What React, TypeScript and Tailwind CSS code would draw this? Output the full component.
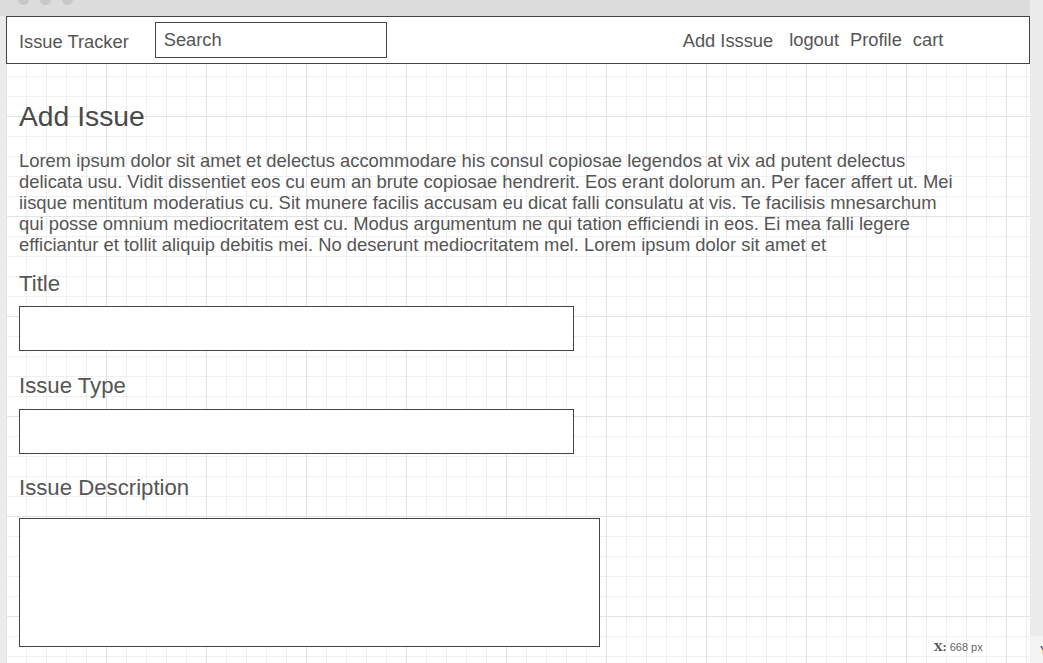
import React from "react";

const gridBg =
  "bg-[linear-gradient(to_right,#e3e3e3_1px,transparent_1px),linear-gradient(to_bottom,#e3e3e3_1px,transparent_1px),linear-gradient(to_right,#efefef_1px,transparent_1px),linear-gradient(to_bottom,#efefef_1px,transparent_1px)] bg-[length:100px_100px,100px_100px,20px_20px,20px_20px]";

const Header = (): React.ReactElement => {
  const links = [
    { name: "Add Isssue", cls: "mt-[2px]" },
    { name: "logout", cls: "ml-[16px]" },
    { name: "Profile", cls: "ml-[11px]" },
    { name: "cart", cls: "ml-[11px]" },
  ];

  return (
    <div className="flex h-[48px] items-center border border-[#444] bg-white pl-[12px] text-[18.3px] text-[#555]">
      <span className="mt-[4px]">Issue Tracker</span>
      <div className="ml-[26px] flex h-[36px] w-[232px] items-center border border-[#444] bg-white pl-[8px]">
        Search
      </div>
      <nav className="ml-[296px] flex items-center">
        {links.map((link) => (
          <a key={link.name} className={"cursor-pointer " + link.cls}>
            {link.name}
          </a>
        ))}
      </nav>
    </div>
  );
};

const Field = ({
  label,
  top,
  gap,
  box,
}: {
  label: string;
  top: string;
  gap: string;
  box: string;
}): React.ReactElement => {
  return (
    <div className={top}>
      <label className="block text-[22.2px] leading-[25px] text-[#555]">
        {label}
      </label>
      <div className={gap + " border border-[#444] bg-white " + box} />
    </div>
  );
};

const App = (): React.ReactElement => {
  return (
    <div className="flex h-[663px] w-full overflow-hidden font-['Liberation_Sans',Arial,sans-serif]">
      <div className="flex w-[1030px] shrink-0 flex-col">
        {/* window chrome */}
        <div className="flex h-[16px] shrink-0 gap-[11px] overflow-hidden bg-[#dcdcdc] pl-[18px]">
          <span className="-mt-[6px] h-[11px] w-[11px] rounded-full bg-[#c8c8c8]" />
          <span className="-mt-[6px] h-[11px] w-[11px] rounded-full bg-[#c8c8c8]" />
          <span className="-mt-[6px] h-[11px] w-[11px] rounded-full bg-[#c8c8c8]" />
        </div>
        <div className="flex flex-1">
          <div className="w-[6px] bg-[#ebebeb]" />
          <div className={"relative flex-1 bg-white " + gridBg}>
            <Header />
            <div className="px-[13px] text-[#555]">
              <h1 className="mt-[36px] text-[28.3px] leading-[32px] text-[#4a4a4a]">
                Add Issue
              </h1>
              <p className="mt-[18px] max-w-[940px] text-[18.4px] leading-[21px]">
                Lorem ipsum dolor sit amet et delectus accommodare his consul
                copiosae legendos at vix ad putent delectus delicata usu. Vidit
                dissentiet eos cu eum an brute copiosae hendrerit. Eos erant
                dolorum an. Per facer affert ut. Mei iisque mentitum moderatius
                cu. Sit munere facilis accusam eu dicat falli consulatu at vis.
                Te facilisis mnesarchum qui posse omnium mediocritatem est cu.
                Modus argumentum ne qui tation efficiendi in eos. Ei mea falli
                legere efficiantur et tollit aliquip debitis mei. No deserunt
                mediocritatem mel. Lorem ipsum dolor sit amet et
              </p>
              <Field
                label="Title"
                top="mt-[16px]"
                gap="mt-[10px]"
                box="h-[45px] w-[555px]"
              />
              <Field
                label="Issue Type"
                top="mt-[22px]"
                gap="mt-[11px]"
                box="h-[45px] w-[555px]"
              />
              <Field
                label="Issue Description"
                top="mt-[21px]"
                gap="mt-[18px]"
                box="h-[129px] w-[581px]"
              />
            </div>
            <div className="absolute bottom-[7px] left-[928px] text-[11px] text-[#666]">
              <b className="font-['DejaVu_Serif',serif] text-[#555]">X:</b> 668 px
            </div>
          </div>
        </div>
      </div>
      <div className="flex min-w-0 flex-1 flex-col bg-[#ececec]">
        <div className="flex-1" />
        <div className="h-[27px] bg-[#f4f4f4] pl-[10px] pt-[6px] text-[11px] font-bold text-[#555]">
          Y
        </div>
      </div>
    </div>
  );
};

export default App;
